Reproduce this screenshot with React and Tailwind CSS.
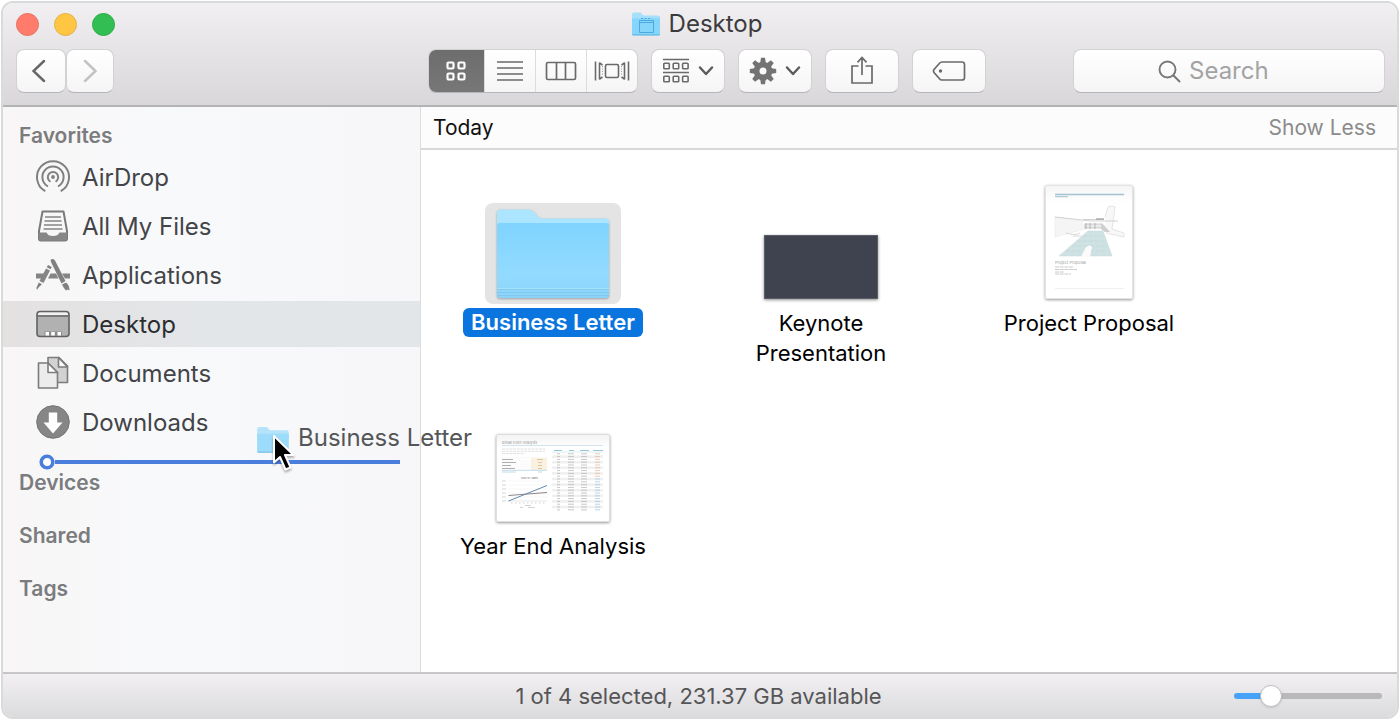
import React, { useState } from "react";

const BUTTON =
  "flex h-11 items-center justify-center rounded-lg border border-[#d3d1d3] border-b-[#b5b4b6] bg-linear-to-b from-white to-[#f6f5f6] text-[#6b6b6b]";

function SmallFolder({ className, glyph }) {
  return (
    <svg viewBox="0 0 30 26" className={className} aria-hidden="true">
      <path d="M1 3.5Q1 1.5 3 1.5H9.5L12.5 4.5H27Q29 4.5 29 6.5V12H1Z" fill="#a5dffa" />
      <path d="M1 7.5H29V23Q29 24.5 27.500 24.500H2.500Q1 24.500 1 23Z" fill="#86d5fb" />
      <path d="M1 23H29Q29 24.500 27.500 24.500H2.500Q1 24.500 1 23Z" fill="#6fbfe8" />
      {glyph && (
        <g fill="none" stroke="#4da9dc">
          <path d="M8.500 9.500H22.500V21.500H8.500Z" />
          <path d="M8.500 11.500H22.500" />
          <path d="M10 7.500H21" strokeDasharray="2 1.500" />
        </g>
      )}
    </svg>
  );
}

function Chevron() {
  return (
    <svg viewBox="0 0 16 10" className="h-[10px] w-4" fill="none" stroke="#5b5b5b" strokeWidth="2.400" strokeLinecap="round" strokeLinejoin="round" aria-hidden="true">
      <path d="M2 1.500L8 8L14 1.500" />
    </svg>
  );
}

function GridIcon() {
  return (
    <svg viewBox="0 0 20 20" className="size-5" fill="none" stroke="#fff" strokeWidth="2.200" aria-hidden="true">
      {[1.5, 12.5].map((y) => [1.5, 12.5].map((x) => <rect key={`${x}-${y}`} x={x} y={y} width="6" height="6" rx="1.2" />))}
    </svg>
  );
}

function ListIcon() {
  return (
    <svg viewBox="0 0 28 20" className="h-5 w-7" stroke="#6a6a6a" strokeWidth="1.600" aria-hidden="true">
      <path d="M1 1H27M1 7H27M1 13H27M1 19H27" />
    </svg>
  );
}

function ColumnsIcon() {
  return (
    <svg viewBox="0 0 32 20" className="h-5 w-8" fill="none" stroke="#6a6a6a" strokeWidth="1.700" aria-hidden="true">
      <rect x="1.500" y="1.500" width="29" height="17" rx="1.500" />
      <path d="M11.500 1.500V18.500M20.500 1.500V18.500" />
    </svg>
  );
}

function CoverFlowIcon() {
  return (
    <svg viewBox="0 0 36 20" className="h-5 w-9" fill="none" stroke="#6a6a6a" strokeWidth="1.600" aria-hidden="true">
      <rect x="11.500" y="3.500" width="13" height="13" rx="1.500" />
      <path d="M1.500 0.500V19.500M34.500 0.500V19.500M5.500 1.500V18.500M30.500 1.500V18.500" />
      <path d="M5.500 2L8.500 4M5.500 18L8.500 16M30.500 2L27.500 4M30.500 18L27.500 16" />
      <path d="M8.500 5V15M27.500 5V15" strokeWidth="0.700" strokeDasharray="1 1.500" />
    </svg>
  );
}

function ArrangeIcon() {
  return (
    <svg viewBox="0 0 28 26" className="h-[26px] w-7" fill="none" stroke="#6a6a6a" strokeWidth="1.600" aria-hidden="true">
      <path d="M1 1.500H27M1 14.500H27" />
      {[5.3, 18.3].map((y) => [1.8, 11.2, 20.6].map((x) => <rect key={`${x}-${y}`} x={x} y={y} width="5.500" height="5.500" rx="0.800" />))}
    </svg>
  );
}

function GearIcon() {
  return (
    <svg viewBox="-14 -14 28 28" className="size-7" aria-hidden="true">
      <g fill="#737373">
        {[0, 45, 90, 135, 180, 225, 270, 315].map((a) => (
          <path key={a} d="M-3 -7L-2 -13.200H2L3 -7Z" transform={`rotate(${a})`} />
        ))}
      </g>
      <circle r="6.400" fill="none" stroke="#737373" strokeWidth="5.800" />
    </svg>
  );
}

function ShareIcon() {
  return (
    <svg viewBox="0 0 24 30" className="h-[30px] w-6" fill="none" stroke="#6a6a6a" strokeWidth="1.700" aria-hidden="true">
      <path d="M8.500 10H2V27H22V10H15.500" />
      <path d="M12 19V1.500M7.500 6.300L12 1.500L16.500 6.300" />
    </svg>
  );
}

function TagIcon() {
  return (
    <svg viewBox="0 0 34 22" className="h-[22px] w-[34px]" aria-hidden="true">
      <path d="M10 2H30Q32.500 2 32.500 4.500V17.500Q32.500 20 30 20H10Q8.500 20 7.500 18.800L2 12.500Q1 11 2 9.500L7.500 3.200Q8.500 2 10 2Z" fill="none" stroke="#6a6a6a" strokeWidth="1.700" />
      <circle cx="8.500" cy="11" r="1.700" fill="#6a6a6a" />
    </svg>
  );
}

function AirDropIcon() {
  return (
    <svg viewBox="0 0 34 34" className="size-[34px]" fill="none" stroke="#808080" strokeWidth="2" strokeLinecap="round" aria-hidden="true">
      <circle cx="17" cy="17" r="1.900" fill="#808080" stroke="none" />
      <path d="M13.800 21.200A5.200 5.200 0 1 1 20.200 21.200" />
      <path d="M11.300 26A10.600 10.600 0 1 1 22.700 26" />
      <path d="M8.500 30.700A16 16 0 1 1 25.500 30.700" />
    </svg>
  );
}

function FilesIcon() {
  return (
    <svg viewBox="0 0 34 34" className="size-[34px]" aria-hidden="true">
      <path d="M6.500 2.500H27.500L31 22V29.500Q31 31.500 29 31.500H5Q3 31.500 3 29.500V22Z" fill="#f7f7f7" stroke="#7a7a7a" strokeWidth="2" strokeLinejoin="round" />
      <path d="M9 8H25M8.500 12H25.500M8 16H26M7.500 20H26.500" stroke="#858585" strokeWidth="1.500" />
      <path d="M3 23.500H10.500Q12 27 17 27T23.500 23.500H31V29.500Q31 31.500 29 31.500H5Q3 31.500 3 29.500Z" fill="#878787" />
    </svg>
  );
}

function ApplicationsIcon() {
  return (
    <svg viewBox="0 0 34 34" className="size-[34px]" aria-hidden="true">
      <path d="M0 15.500H10.500L8 20.500H0ZM14.500 15.500H20L22.500 20.500H12ZM26 15.500H34V20.500H29Z" fill="#858585" />
      <path d="M15 4Q14 1.500 16 1Q18 0.500 19 2.500L29.500 23L25.500 25.500Z" fill="#808080" />
      <path d="M26 26.500L30 24.500Q33.500 27 33.500 32.500L31.500 31.500L30 32.500Q27.500 30 26 26.500Z" fill="#808080" />
      <path d="M12 7L15.800 9L14.600 11.300L10.800 9.300Z" fill="#808080" />
      <path d="M10 10.500L14 12.500L7.500 25L3.500 23Z" fill="#858585" />
      <path d="M2.800 24.500L6 26.200L3 29L0.800 32L0.500 29.500Z" fill="#808080" />
    </svg>
  );
}

function DesktopIcon() {
  return (
    <svg viewBox="0 0 34 28" className="h-7 w-[34px]" aria-hidden="true">
      <rect x="1" y="1.500" width="32" height="25" rx="3" fill="#b1b1b1" stroke="#626262" strokeWidth="1.600" />
      <path d="M2 4.500Q2 2.500 4 2.500H30Q32 2.500 32 4.500V5H2Z" fill="#f2f2f2" />
      <path d="M1.500 6H32.500" stroke="#626262" strokeWidth="1.400" />
      <path d="M8.500 21.500H26V26H8.500Z" fill="#8a8a8a" />
      <path d="M9.500 22H13V25.500H9.500ZM15.200 22H18.800V25.500H15.200ZM21.500 22H25V25.500H21.500Z" fill="#fff" />
    </svg>
  );
}

function DocumentsIcon() {
  return (
    <svg viewBox="0 0 34 34" className="size-[34px]" stroke="#7c7c7c" strokeWidth="1.600" strokeLinejoin="round" aria-hidden="true">
      <path d="M12 1.500H23L31.500 10V26.500H12Z" fill="#d2d2d2" />
      <path d="M22.500 1.500V11H31.500Z" fill="#fafafa" />
      <path d="M2.500 7H12L21.500 16.500V32H2.500Z" fill="#ececec" />
      <path d="M12 7V16.500H21.500Z" fill="#fff" />
    </svg>
  );
}

function DownloadsIcon() {
  return (
    <svg viewBox="0 0 34 34" className="size-[34px]" aria-hidden="true">
      <circle cx="17" cy="17" r="16.300" fill="#868686" stroke="#747474" />
      <path d="M12.800 7.500H21.200V17.500H26.500L17 28.500L7.500 17.500H12.800Z" fill="#fff" />
    </svg>
  );
}

const FAVORITES = [
  ["AirDrop", AirDropIcon],
  ["All My Files", FilesIcon],
  ["Applications", ApplicationsIcon],
  ["Desktop", DesktopIcon],
  ["Documents", DocumentsIcon],
  ["Downloads", DownloadsIcon],
];

const VIEWS = [
  ["Icon view", GridIcon],
  ["List view", ListIcon],
  ["Column view", ColumnsIcon],
  ["Cover Flow view", CoverFlowIcon],
];

function BigFolder() {
  return (
    <svg viewBox="0 0 116 92" className="h-[92px] w-[116px] drop-shadow-[0_1px_1px_rgba(0,0,0,0.3)]" aria-hidden="true">
      <defs>
        <linearGradient id="folderFront" x1="0" y1="0" x2="0" y2="1">
          <stop offset="0" stopColor="#7fd4ff" />
          <stop offset="0.700" stopColor="#93daff" />
          <stop offset="1" stopColor="#8bd3f8" />
        </linearGradient>
      </defs>
      <path d="M2 5Q2 1.500 5.500 1.500H34Q37 1.500 39 4L42.500 8Q44.500 10.500 47.500 10.500H110.500Q114 10.500 114 14V40H2Z" fill="#abe5ff" />
      <path d="M2 18Q2 15 5 15H111Q114 15 114 18V87Q114 90 111 90H5Q2 90 2 87Z" fill="url(#folderFront)" />
      <path d="M2 80.500H114" stroke="#a7e2fc" />
      <path d="M2 81.500H114M2 84.500H114M2 87.500H114" stroke="#7cc6eb" strokeWidth="0.800" />
    </svg>
  );
}

function KeynoteThumb() {
  return <div className="mb-[5px] h-16 w-[114px] border border-[#5b5d69] bg-[#3f424f] shadow-[0_1px_3px_rgba(0,0,0,0.45)]" />;
}

function ProposalThumb() {
  return (
    <svg viewBox="0 0 86 112" className="mb-[5px] h-[114px] w-[88px] rounded-xs border border-[#e3e3e3] bg-linear-to-b from-[#f5f5f5] to-white to-15% shadow-[0_1px_3px_rgba(0,0,0,0.4)]" aria-hidden="true">
      <path d="M9 8.500H78" stroke="#a3c3d4" strokeWidth="1.500" />
      <path d="M9 10.700H22" stroke="#83aec5" strokeWidth="0.800" />
      <g opacity="0.650">
        <path d="M9 31L36 35L39 43L9 51Z" fill="#f1f1f1" stroke="#d8d8d8" strokeWidth="0.500" />
        <path d="M59 31L62 21Q66 19 69 21L66 43L78 47V51L60 47" fill="#f5f5f5" stroke="#c5c5c5" strokeWidth="0.700" />
        <path d="M9 31L45 35H72M37 33.500H58" stroke="#aaa" strokeWidth="0.800" fill="none" />
        <path d="M50 33H58" stroke="#666" strokeWidth="1.200" />
        <path d="M39 38H56V42H39Z" fill="#dfe2e3" stroke="#929292" strokeWidth="0.700" />
        <path d="M40 37V43M44 37V43M49 37V43" stroke="#777" strokeWidth="0.800" />
        <path d="M56 37L64 46H59L55 43Z" fill="#b5b5b5" />
        <path d="M20 47Q29 50 34 47M27 50H35" stroke="#aaa" strokeWidth="0.700" fill="none" />
      </g>
      <path d="M42 45H57L66 70H13Z" fill="#cfe2e3" stroke="#c2d7d8" strokeWidth="0.500" />
      <path d="M31 55H59M26 60H61M20 65H64M37 50H57" stroke="#bfd8da" strokeWidth="0.800" strokeDasharray="4 2" />
      <path d="M35 71L40 61Q44 58 46 61L44 71Z" fill="#fbfbfb" />
      <text x="9" y="78" fontSize="4" fill="#a0a0a0" fontFamily="Inter, sans-serif">Project Proposal</text>
      <path d="M9 81H27M9 83.500H31M9 86H18M9 88H25" stroke="#bdbdbd" strokeWidth="0.800" strokeDasharray="4 0.700" />
      <path d="M9 102.500H78" stroke="#e5e5e5" strokeWidth="0.600" />
    </svg>
  );
}

function AnalysisThumb() {
  const rows = Array.from({ length: 21 }, (_, i) => i);
  return (
    <svg viewBox="0 0 112 86" className="mb-[5px] h-[88px] w-[114px] rounded-xs border border-[#dedede] bg-linear-to-b from-[#f3f3f3] to-white to-15% shadow-[0_1px_3px_rgba(0,0,0,0.4)]" aria-hidden="true">
      <text x="5" y="9" fontSize="3.700" fill="#999" fontFamily="Inter, sans-serif">Break Even Analysis</text>
      <path d="M5 10.500H106" stroke="#bfd7e3" strokeWidth="0.700" />
      <path d="M5 14H48M5 16.300H48M5 18.600H28" stroke="#cacaca" strokeWidth="0.600" strokeDasharray="3 0.700" />
      <path d="M34 23H50V35H34Z" fill="#fdf3df" />
      <path d="M5 24.500H16M5 27.500H19M5 30.500H14M5 33.500H18" stroke="#999" strokeWidth="0.800" />
      <path d="M40 24.500H46M41 27.500H45M41 30.500H45M41 33.500H45" stroke="#d2bc9b" strokeWidth="0.800" />
      <path d="M5 23H50M5 26H50M5 29H50M5 32H50" stroke="#e3e3e3" strokeWidth="0.300" />
      <path d="M5 37H19M41 37H45M5 35.300H50" stroke="#93c3da" strokeWidth="0.600" />
      <text x="24" y="43.500" fontSize="2.500" fill="#666" fontFamily="Inter, sans-serif">Cost vs. Sales</text>
      <path d="M11 46H50M11 50H50M11 54H50M11 58H50M11 62H50" stroke="#e8e8e8" strokeWidth="0.400" />
      <path d="M5 46H9M5 50H9M5 54H9M5 58H9M5 62H9M5 66H9" stroke="#c4c4c4" strokeWidth="0.700" />
      <path d="M11 66H50" stroke="#ccc" strokeWidth="0.500" />
      <path d="M11.500 60.500L50 57.500" stroke="#888" />
      <path d="M11.500 66L50 50.500" stroke="#6488ac" />
      <path d="M14 68H50" stroke="#bbb" strokeWidth="0.700" strokeDasharray="1.500 2.500" />
      <path d="M28 70.500H34M23 72.500H26M31 72.500H38" stroke="#bbb" strokeWidth="0.700" />
      <path d="M57 15.500H65M72 15.500H77M83 15.500H92M96 15.500H106" stroke="#8dbfce" strokeWidth="0.900" />
      <path d="M55 17H106" stroke="#bfdae2" strokeWidth="0.500" />
      {rows.map((i) => (
        <g key={i}>
          {i % 2 === 1 && <path d={`M55 ${18.8 + i * 2.8}H106`} stroke="#f0f0f0" strokeWidth="2.600" />}
          <path d={`M60 ${18.8 + i * 2.8}h3M71 ${18.8 + i * 2.8}h6M84 ${18.8 + i * 2.8}h6`} stroke="#b9b9b9" strokeWidth="0.800" />
          <path d={`M98 ${18.8 + i * 2.8}h5`} stroke={i < 9 ? "#e2bda3" : "#a6c9de"} strokeWidth="0.800" />
        </g>
      ))}
    </svg>
  );
}

const FILES = [
  ["Business Letter", BigFolder],
  ["Keynote Presentation", KeynoteThumb],
  ["Project Proposal", ProposalThumb],
  ["Year End Analysis", AnalysisThumb],
];

function Header({ view, setView }) {
  return (
    <header className="border-b-2 border-[#b3b2b4] bg-linear-to-b from-[#f2eff2] to-[#d9d7da] pr-3 pb-3 pl-[13px]">
      <div className="grid h-[42px] grid-cols-[1fr_auto_1fr] items-center">
        <div className="flex gap-[15px]">
          <button type="button" aria-label="Close" className="size-[23px] rounded-full border border-[#e8705f] bg-[#ff7c6c]" />
          <button type="button" aria-label="Minimize" className="size-[23px] rounded-full border border-[#e5b044] bg-[#ffc644]" />
          <button type="button" aria-label="Zoom" className="size-[23px] rounded-full border border-[#2bad49] bg-[#32be52]" />
        </div>
        <h1 className="flex items-center gap-2 pr-2 text-2xl text-[#3b3b3d]">
          <SmallFolder className="h-[26px] w-[30px]" glyph />
          Desktop
        </h1>
      </div>
      <div className="mt-1 grid grid-cols-[1fr_auto_1fr] items-center">
        <div className="flex">
          <button type="button" aria-label="Back" className={`${BUTTON} w-[50px]`}>
            <svg viewBox="0 0 14 24" className="mr-1 h-6 w-[14px]" fill="none" stroke="#686868" strokeWidth="2.500" strokeLinecap="round" aria-hidden="true">
              <path d="M12 2L1.500 12L12 22" />
            </svg>
          </button>
          <button type="button" aria-label="Forward" className={`${BUTTON} w-12`}>
            <svg viewBox="0 0 14 24" className="h-6 w-[14px]" fill="none" stroke="#c2c2c2" strokeWidth="2.500" strokeLinecap="round" aria-hidden="true">
              <path d="M2 2L12.500 12L2 22" />
            </svg>
          </button>
        </div>
        <div className="flex gap-[13px] pl-3">
          <div className="flex h-11 overflow-hidden rounded-lg border border-[#d3d1d3] border-b-[#b5b4b6] bg-linear-to-b from-white to-[#f6f5f6]">
            {VIEWS.map(([name, Icon], i) => (
              <button
                key={name}
                type="button"
                aria-label={name}
                aria-pressed={view === i}
                onClick={() => setView(i)}
                className={`flex items-center justify-center ${i === 0 ? "w-[55px]" : "w-[51px] border-l border-[#dcdcdc]"} ${view === i ? "bg-linear-to-b from-[#6d6d6d] to-[#777777]" : i === 0 ? "bg-[#8a8a8a]" : ""}`}
              >
                <Icon />
              </button>
            ))}
          </div>
          <button type="button" aria-label="Arrange items" className={`${BUTTON} w-[74px] gap-2`}>
            <ArrangeIcon />
            <Chevron />
          </button>
          <button type="button" aria-label="Actions" className={`${BUTTON} w-[74px] gap-2`}>
            <GearIcon />
            <Chevron />
          </button>
          <button type="button" aria-label="Share" className={`${BUTTON} w-[74px]`}>
            <ShareIcon />
          </button>
          <button type="button" aria-label="Edit tags" className={`${BUTTON} w-[74px]`}>
            <TagIcon />
          </button>
        </div>
        <label className={`${BUTTON} w-78 gap-2 justify-self-end pr-6`}>
          <svg viewBox="0 0 24 24" className="size-6" fill="none" stroke="#777" strokeWidth="1.900" strokeLinecap="round" aria-hidden="true">
            <circle cx="10.500" cy="10.500" r="8" />
            <path d="M16.500 16.500L22.500 22.500" />
          </svg>
          <input type="text" aria-label="Search" placeholder="Search" className="w-[88px] bg-transparent text-2xl text-[#444] outline-none placeholder:text-[#a3a3a3]" />
        </label>
      </div>
    </header>
  );
}

function SectionTitle({ children }) {
  return <h2 className="pl-4 text-[21px] leading-[30px] font-semibold text-[#7b7c7e]">{children}</h2>;
}

function Sidebar() {
  return (
    <nav aria-label="Sidebar" className="relative z-10 w-[418px] shrink-0 border-r border-[#dcdcdd] bg-linear-to-r from-[#f8f6f6] via-[#f8f9fb] via-35% to-[#f7f7f9] pt-[14px]">
      <SectionTitle>Favorites</SectionTitle>
      <ul className="mt-[3px] flex flex-col gap-[3px]">
        {FAVORITES.map(([name, Icon]) => (
          <li key={name}>
            <a
              href={`#${name.toLowerCase().replaceAll(" ", "-")}`}
              aria-current={name === "Desktop" ? "page" : undefined}
              className={`flex h-[46px] items-center gap-3 pl-[33px] text-2xl ${name === "Desktop" ? "bg-linear-to-r from-[#e4e1e1] to-[#e3e6e9] to-50% text-[#2c2d30]" : "text-[#434447]"}`}
            >
              <Icon />
              <span className="pt-0.5">{name}</span>
            </a>
          </li>
        ))}
      </ul>
      <div className="flex h-[23px] items-center pt-2.5 pr-5 pl-9">
        <svg viewBox="0 0 16 16" className="size-4 shrink-0" aria-hidden="true">
          <circle cx="8" cy="8" r="5.800" fill="#fff" stroke="#4a7edd" strokeWidth="3.600" />
        </svg>
        <div className="h-1 grow bg-[#4a7edd]" />
      </div>
      <div className="flex flex-col gap-[23px]">
        <SectionTitle>Devices</SectionTitle>
        <SectionTitle>Shared</SectionTitle>
        <SectionTitle>Tags</SectionTitle>
      </div>

      <div className="absolute top-[314px] left-[253px] flex items-center gap-2 text-2xl whitespace-nowrap text-[#555658]">
        <SmallFolder className="mt-1 h-[30px] w-[34px] opacity-80" />
        <span>Business Letter</span>
        <svg viewBox="0 0 24 38" className="absolute top-[13px] left-4 h-[38px] w-6 drop-shadow-[0_2px_1px_rgba(0,0,0,0.3)]" aria-hidden="true">
          <path d="M2 2V28.500L8 23L13.500 35.500L18.500 33.300L13 21H21.500Z" fill="#000" stroke="#fff" strokeWidth="2" strokeLinejoin="round" />
        </svg>
      </div>
    </nav>
  );
}

function FileItem({ name, Thumb, selected, onSelect }) {
  return (
    <button type="button" aria-pressed={selected} onClick={onSelect} className="flex flex-col items-center">
      <span className="flex h-[153px] items-end">
        <span className={name === "Business Letter" ? `flex h-[101px] w-[136px] items-center justify-center rounded-lg ${selected ? "bg-[#e4e4e4]" : ""}` : ""}>
          <Thumb />
        </span>
      </span>
      <span className="mt-1 max-w-[200px] text-[22px] leading-[30px]">
        <span className={selected ? "block rounded-md bg-[#0a74df] px-2 leading-[29px] font-semibold text-white" : "text-black"}>{name}</span>
      </span>
    </button>
  );
}

export default function App() {
  const [view, setView] = useState(0);
  const [selected, setSelected] = useState("Business Letter");
  const [size, setSize] = useState(21);

  return (
    <div className="flex min-h-screen flex-col bg-white p-px font-['Inter','Liberation_Sans',sans-serif]">
      <div className="flex grow flex-col overflow-hidden rounded-xl border-2 border-[#d9dada]">
        <Header view={view} setView={setView} />
        <div className="flex grow">
          <Sidebar />
          <main className="min-w-0 grow bg-white">
            <div className="flex h-[43px] items-center justify-between border-b-2 border-[#d8d8d8] bg-[#fcfcfc] pr-[21px] pl-3 text-[21px]">
              <h2 className="text-[#111]">Today</h2>
              <button type="button" className="text-[#8b8b8b]">Show Less</button>
            </div>
            <div className="-ml-0.5 grid auto-rows-[223px] grid-cols-[repeat(auto-fill,268px)] items-start pt-px">
              {FILES.map(([name, Thumb]) => (
                <FileItem key={name} name={name} Thumb={Thumb} selected={selected === name} onSelect={() => setSelected(name)} />
              ))}
            </div>
          </main>
        </div>
        <footer className="grid h-[45px] grid-cols-[1fr_auto_1fr] items-center border-t-2 border-[#c6c5c7] bg-linear-to-b from-[#f2f0f2] to-[#dbdadc] pr-[15px] pl-3">
          <p className="col-start-2 text-[22px] leading-7 text-[#555557]">1 of 4 selected, 231.37 GB available</p>
          <input
            type="range"
            aria-label="Icon size"
            value={size}
            onChange={(e) => setSize(Number(e.target.value))}
            style={{ "--fill": `${size + 5}%` }}
            className="h-6 w-[148px] appearance-none justify-self-end bg-transparent [&::-webkit-slider-runnable-track]:h-[6px] [&::-webkit-slider-runnable-track]:rounded-full [&::-webkit-slider-runnable-track]:bg-[linear-gradient(to_right,#46a2fb_var(--fill),#b9b9b9_var(--fill))] [&::-webkit-slider-thumb]:-mt-2 [&::-webkit-slider-thumb]:size-[22px] [&::-webkit-slider-thumb]:appearance-none [&::-webkit-slider-thumb]:rounded-full [&::-webkit-slider-thumb]:border [&::-webkit-slider-thumb]:border-[#c2c2c2] [&::-webkit-slider-thumb]:bg-white [&::-webkit-slider-thumb]:shadow-sm"
          />
        </footer>
      </div>
    </div>
  );
}
